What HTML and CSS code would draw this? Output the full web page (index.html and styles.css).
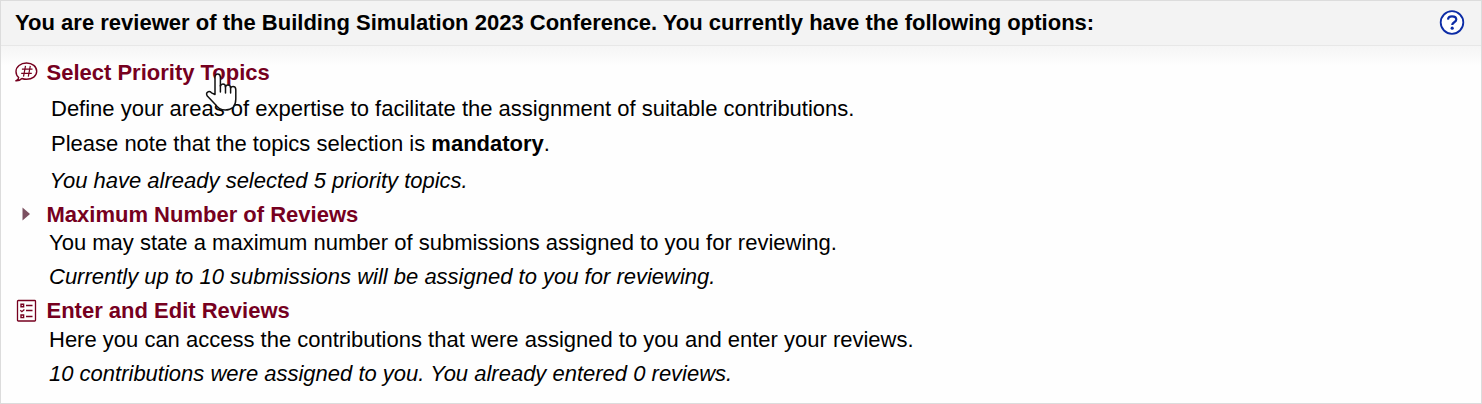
FILE: index.html
```html
<!DOCTYPE html>
<html lang="en">
<head>
<meta charset="utf-8">
<title>Reviewer options</title>
<link rel="stylesheet" href="styles.css">
</head>
<body>
<section class="panel">
  <header class="panel-header">
    <h1 class="panel-title">You are reviewer of the Building Simulation 2023 Conference. You currently have the following options:</h1>
    <svg class="help" viewBox="0 0 26 26"><circle cx="13" cy="12.500" r="11.300" fill="#fff" stroke="#0c2ca6" stroke-width="1.800"/><path d="M9 9.600C9.100 7.200 10.700 6.300 13 6.300S17.300 7.400 17.300 9.500C17.300 12.300 13.200 12.200 13.200 15" fill="none" stroke="#0c2ca6" stroke-width="2.200"/><circle cx="13.200" cy="18.200" r="1.600" fill="#0c2ca6"/></svg>
  </header>
  <main class="options">
    <article class="option topics">
      <svg class="icon" viewBox="0 0 24 24"><path d="M3.700 16.500C1.900 15 1 12.900 1 10.500 1 5.700 5.600 2 11.500 2S21.700 5.500 21.700 10.300 17.300 18.300 11.500 18.300c-1.700 0-3.200-.3-4.600-.8C5.200 19.200 3.300 20 .8 19.800c1.700-.8 2.900-1.800 2.900-3.300z" fill="none" stroke="#76001f" stroke-width="1.400" stroke-linejoin="round"/><path d="M10.500 4.800 8.500 15.600M15.300 4.800l-2 10.800M6.900 8.200h10.600M6.200 12.400h10.600" fill="none" stroke="#76001f" stroke-width="1.200"/></svg>
      <div class="option-body">
        <h2 class="option-title">Select Priority Topics</h2>
        <p class="line desc">Define your areas of expertise to facilitate the assignment of suitable contributions.</p>
        <p class="line note">Please note that the topics selection is <b>mandatory</b>.</p>
        <p class="line status">You have already selected 5 priority topics.</p>
      </div>
      <svg class="pointer" viewBox="0 0 34 42"><path d="M10 22.500V5.500C10 3.200 11.200 2 12.700 2s2.700 1.200 2.700 3.500V14c.4-1.500 1.300-2.100 2.500-2.100 1.500 0 2.600 1 2.600 3 .4-1.300 1.300-1.900 2.500-1.900 1.600 0 2.600 1.100 2.600 3 .5-1 1.400-1.400 2.400-1.400 1.600 0 2.800 1.200 2.800 3.200V27c0 7-4 11-10.500 11-4.500 0-7.700-2-9.900-5.600L2.300 24c-1-1.700-.9-3.100.3-3.900 1.300-.9 2.700-.5 3.900.7z" fill="#fff" stroke="#111" stroke-width="1.500" stroke-linejoin="round"/><path d="M15.400 13.500V20M20.500 14.500V21M25.600 15.500V21" stroke="#111" stroke-width="1.500" stroke-linecap="round"/></svg>
    </article>
    <article class="option maximum">
      <svg class="icon" viewBox="0 0 24 24"><path d="M7.500 4.500v13l7.500-6.500z" fill="#7c5060"/></svg>
      <div class="option-body">
        <h2 class="option-title">Maximum Number of Reviews</h2>
        <p class="line desc">You may state a maximum number of submissions assigned to you for reviewing.</p>
        <p class="line status">Currently up to 10 submissions will be assigned to you for reviewing.</p>
      </div>
    </article>
    <article class="option reviews">
      <svg class="icon" viewBox="0 0 24 24" fill="none" stroke="#76001f"><rect x="2.500" y="1.500" width="18" height="20.500" rx=".8" stroke-width="1.300"/><path d="M11 6.500h6.500M11 11.500h6.500M11 17.500h6.500M5.300 11.300l1.600 1.400L9.400 10.500" stroke-width="1.300"/><path d="M6 5.200h2.600v2.600H6zM6 16h2.600v2.600H6z" stroke-width="1.400"/></svg>
      <div class="option-body">
        <h2 class="option-title">Enter and Edit Reviews</h2>
        <p class="line desc">Here you can access the contributions that were assigned to you and enter your reviews.</p>
        <p class="line status">10 contributions were assigned to you. You already entered 0 reviews.</p>
      </div>
    </article>
  </main>
</section>
</body>
</html>
```
FILE: styles.css
```css
* { box-sizing: border-box; }
body {
  margin: 0;
  font: 22px/24px "Liberation Sans", Arial, sans-serif;
  color: #000;
}
h1, h2, p { margin: 0; font-size: inherit; white-space: nowrap; }
.panel { height: 404px; border: 1px solid #dcdcdc; background: #fefefe; }
.panel-header {
  display: flex;
  align-items: center;
  justify-content: space-between;
  height: 45px;
  padding: 0 16px 0 14px;
  background: #f3f3f3;
  border-bottom: 1px solid #e7e7e7;
}
.panel-title { letter-spacing: 0.01px; }
.help { width: 26px; height: 26px; }
.options {
  padding: 15px 14px 0;
  background: linear-gradient(#f5f5f5, #fefefe 20px);
}
.option { display: flex; position: relative; }
.icon { flex: none; width: 24px; height: 24px; }
.option-body { padding-left: 7.5px; }
.option-title { color: #76001f; }
.line { padding-left: 2.5px; }
.topics .line { padding-left: 4.5px; }
.status { font-style: italic; }
.topics .desc { margin-top: 12px; }
.topics .note { margin-top: 11px; }
.topics .status { margin-top: 13px; padding-left: 3px; }
.maximum { margin-top: 10px; }
.maximum .desc { margin-top: 4px; }
.maximum .status, .reviews .status { margin-top: 10px; }
.reviews { margin-top: 10px; }
.reviews .desc { margin-top: 5px; }
.pointer { position: absolute; left: 190px; top: 11px; width: 34px; height: 42px; }
```
